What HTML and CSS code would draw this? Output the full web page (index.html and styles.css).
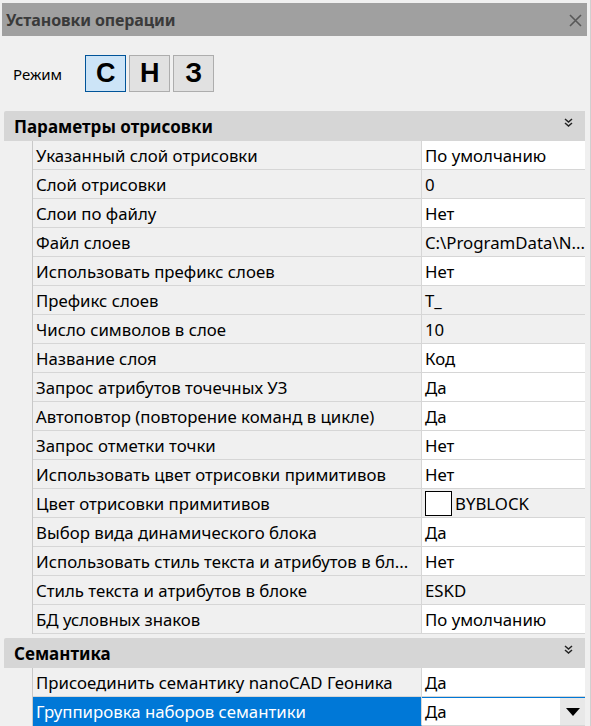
FILE: index.html
```html
<!DOCTYPE html>
<html lang="ru">
<head>
<meta charset="utf-8">
<link rel="stylesheet" href="styles.css">
</head>
<body>
<div class="window">
  <div class="titlebar">
    <span class="title">Установки операции</span>
    <svg class="close" width="13" height="13" viewBox="0 0 13 13"><path d="M1 1L12 12M12 1L1 12" stroke="#585858" stroke-width="1.6"/></svg>
  </div>
  <div class="mode">
    <span class="mode-label">Режим</span>
    <div class="mode-buttons">
      <span class="mbtn active">С</span>
      <span class="mbtn">Н</span>
      <span class="mbtn">З</span>
    </div>
  </div>
  <div class="grid">
    <div class="section">
      <div class="sec-head"><span>Параметры отрисовки</span><svg class="chev" width="9" height="9" viewBox="0 0 9 9"><path d="M1 1L4.5 4L8 1M1 5L4.5 8L8 5" fill="none" stroke="#222" stroke-width="1.5"/></svg></div>
      <div class="row"><div class="ind"></div><div class="name">Указанный слой отрисовки</div><div class="val">По умолчанию</div></div>
      <div class="row"><div class="ind"></div><div class="name">Слой отрисовки</div><div class="val ro">0</div></div>
      <div class="row"><div class="ind"></div><div class="name">Слои по файлу</div><div class="val">Нет</div></div>
      <div class="row"><div class="ind"></div><div class="name">Файл слоев</div><div class="val ro">C:\ProgramData\N...</div></div>
      <div class="row"><div class="ind"></div><div class="name">Использовать префикс слоев</div><div class="val">Нет</div></div>
      <div class="row"><div class="ind"></div><div class="name">Префикс слоев</div><div class="val ro">T_</div></div>
      <div class="row"><div class="ind"></div><div class="name">Число символов в слое</div><div class="val ro">10</div></div>
      <div class="row"><div class="ind"></div><div class="name">Название слоя</div><div class="val">Код</div></div>
      <div class="row"><div class="ind"></div><div class="name">Запрос атрибутов точечных УЗ</div><div class="val">Да</div></div>
      <div class="row"><div class="ind"></div><div class="name">Автоповтор (повторение команд в цикле)</div><div class="val">Да</div></div>
      <div class="row"><div class="ind"></div><div class="name">Запрос отметки точки</div><div class="val">Нет</div></div>
      <div class="row"><div class="ind"></div><div class="name">Использовать цвет отрисовки примитивов</div><div class="val">Нет</div></div>
      <div class="row"><div class="ind"></div><div class="name">Цвет отрисовки примитивов</div><div class="val ro"><span class="swatch"></span>BYBLOCK</div></div>
      <div class="row"><div class="ind"></div><div class="name">Выбор вида динамического блока</div><div class="val">Да</div></div>
      <div class="row"><div class="ind"></div><div class="name">Использовать стиль текста и атрибутов в бл...</div><div class="val">Нет</div></div>
      <div class="row"><div class="ind"></div><div class="name">Стиль текста и атрибутов в блоке</div><div class="val ro">ESKD</div></div>
      <div class="row"><div class="ind"></div><div class="name">БД условных знаков</div><div class="val">По умолчанию</div></div>
    </div>
    <div class="section">
      <div class="sec-head"><span>Семантика</span><svg class="chev" width="9" height="9" viewBox="0 0 9 9"><path d="M1 1L4.5 4L8 1M1 5L4.5 8L8 5" fill="none" stroke="#222" stroke-width="1.5"/></svg></div>
      <div class="row"><div class="ind"></div><div class="name">Присоединить семантику nanoCAD Геоника</div><div class="val">Да</div></div>
      <div class="row selected"><div class="ind"></div><div class="name">Группировка наборов семантики</div><div class="val"><span class="val-text">Да</span><span class="drop"><svg width="14" height="8" viewBox="0 0 14 8"><path d="M0 0H14L7 8Z" fill="#000"/></svg></span></div></div>
    </div>
  </div>
</div>
</body>
</html>
```
FILE: styles.css
```css
html, body {
  margin: 0;
  padding: 0;
  background: #f0f0f0;
}
body {
  font-family: "Noto Sans", "Open Sans", sans-serif;
  color: #000;
  width: 591px;
  height: 726px;
  overflow: hidden;
}
.window {
  padding: 3px 3px 0 2px;
  height: 726px;
  box-sizing: border-box;
  border-right: 1px solid #d0d0d0;
}
.titlebar {
  height: 33px;
  background: #a0a0a0;
  display: flex;
  align-items: center;
  justify-content: space-between;
  padding: 0 5px 0 4px;
}
.title {
  font-weight: bold;
  font-size: 16px;
  color: #3a3a3a;
  letter-spacing: -0.1px;
}
.close {
  display: block;
  margin-top: 1px;
}
.mode {
  display: flex;
  align-items: center;
  height: 75px;
  padding-left: 11px;
  gap: 23px;
}
.mode-label {
  font-size: 15px;
}
.mode-buttons {
  display: flex;
  gap: 3px;
}
.mbtn {
  width: 39px;
  height: 35px;
  box-sizing: content-box;
  display: flex;
  align-items: center;
  justify-content: center;
  font-family: "Liberation Sans", Arial, sans-serif;
  font-weight: bold;
  font-size: 27px;
  background: #e1e1e1;
  border: 1px solid #adadad;
}
.mbtn.active {
  background: #cce4f7;
  border-color: #005499;
}
.grid {
  margin-left: 2px;
  width: 581px;
  display: flex;
  flex-direction: column;
  gap: 4px;
}
.sec-head {
  height: 30px;
  background: #d6d6d6;
  display: flex;
  align-items: center;
  justify-content: space-between;
  padding: 0 12px 0 10px;
  font-weight: bold;
  font-size: 17px;
  border-top-left-radius: 2px;
}
.chev {
  display: block;
  margin-top: -7px;
}
.row {
  display: grid;
  grid-template-columns: 29px 1fr 163px;
  height: 29px;
  font-size: 16.8px;
}
.ind {
  border-right: 1px solid #c8c8c8;
}
.name, .val {
  border-bottom: 1px solid #d6d6d6;
  display: flex;
  align-items: center;
  white-space: nowrap;
  overflow: hidden;
}
.name {
  padding-left: 3px;
  border-right: 1px solid #d6d6d6;
}
.val {
  background: #fff;
  padding-left: 3px;
}
.val.ro {
  background: #f0f0f0;
}
.swatch {
  width: 25px;
  height: 23px;
  border: 1px solid #000;
  background: #fff;
  margin-right: 3px;
  flex: none;
}
.selected .name {
  background: #0078d7;
  color: #fff;
  border-bottom-color: #0078d7;
}
.selected .val {
  border-top: 1px solid #0078d7;
  justify-content: space-between;
  padding-right: 0;
}
.drop {
  width: 25px;
  align-self: stretch;
  background: #e8e8e8;
  display: flex;
  align-items: center;
  justify-content: center;
}
.drop svg {
  display: block;
}
```
